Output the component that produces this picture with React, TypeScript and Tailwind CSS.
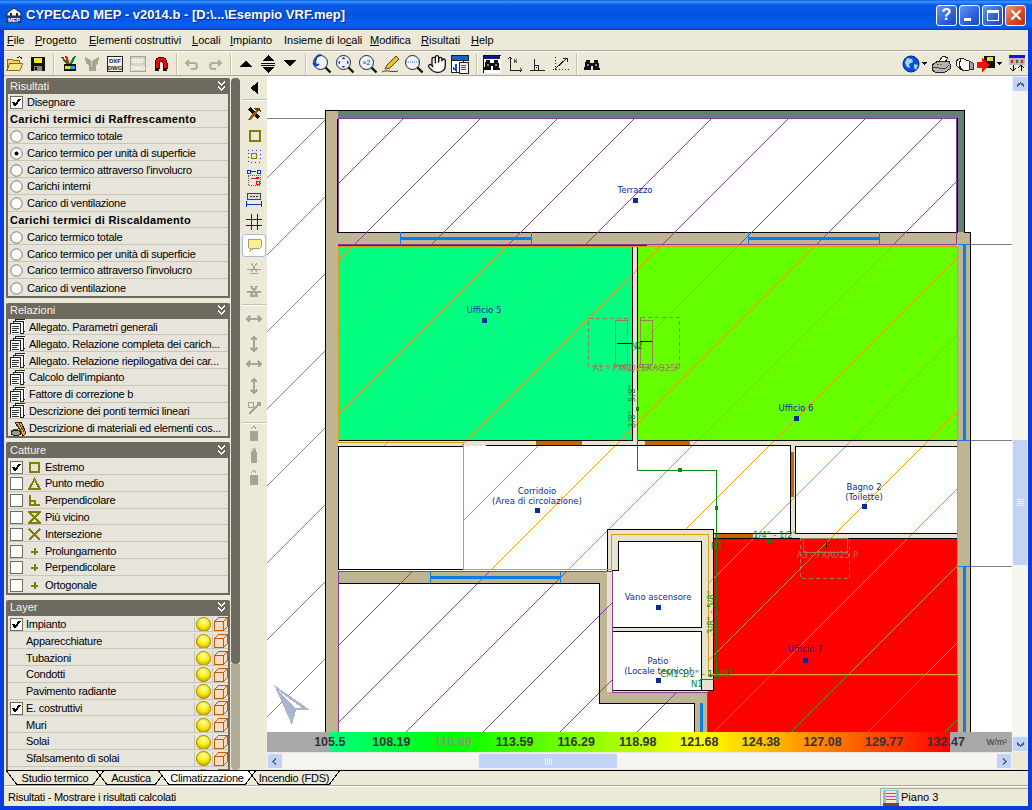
import type { ReactNode } from "react";
import { Hand } from "lucide-react";

const font = { fontFamily: '"Liberation Sans", Arial, sans-serif' };
const cad = "'DejaVu Sans', sans-serif";

// --- small pixel icons ---
const Ico = ({ w = 18, h = 18, vb, children }: { w?: number; h?: number; vb?: string; children: ReactNode }) => (
  <svg width={w} height={h} viewBox={vb ?? `0 0 ${w} ${h}`} shapeRendering="crispEdges" className="shrink-0">
    {children}
  </svg>
);

const Folder = () => (
  <Ico>
    <path d="M1 15V4h5l1 1h6v3" fill="#f5d36a" stroke="#8a6a10" />
    <path d="M1 15l3-7h13l-3 7z" fill="#fbe38a" stroke="#8a6a10" />
    <path d="M11 3c2-2 4-1 5 1" fill="none" stroke="#222" />
  </Ico>
);
const Floppy = () => (
  <Ico>
    <rect x="2" y="2" width="14" height="14" fill="#111" />
    <rect x="5" y="3" width="8" height="5" fill="#f0e040" />
    <rect x="5" y="11" width="8" height="5" fill="#888" />
    <rect x="6" y="12" width="2" height="3" fill="#111" />
  </Ico>
);
const Pencils = () => (
  <Ico>
    <path d="M2 2l6 8M15 1l-5 9" stroke="#1a7a1a" strokeWidth="2" />
    <path d="M6 1l3 9" stroke="#d02020" strokeWidth="2" />
    <rect x="4" y="9" width="12" height="7" fill="#111" />
    <rect x="5" y="11" width="5" height="3" fill="#f0e020" />
    <rect x="10" y="11" width="5" height="3" fill="#30a0e0" />
  </Ico>
);
const Shirt = () => (
  <Ico>
    <path d="M2 2l4 2 3 2 3-2 4-2-1 7-2 1v6H6v-6L3 9z" fill="#a8a494" />
    <path d="M8 5v7" stroke="#d8d4c4" />
  </Ico>
);
const Dxf = ({ off }: { off?: boolean }) => (
  <svg width="18" height="18" viewBox="0 0 18 18" className="shrink-0">
    <rect x="1.5" y="1.5" width="15" height="15" fill={off ? "#d8d4c4" : "#f4f4f4"} stroke={off ? "#a8a494" : "#222"} />
    <text x="9" y="8" fontSize="6" fontWeight="bold" textAnchor="middle" fill={off ? "#fff" : "#222"} fontFamily="Liberation Sans">DXF</text>
    <text x="9" y="14.5" fontSize="6" fontWeight="bold" textAnchor="middle" fill={off ? "#fff" : "#222"} fontFamily="Liberation Sans">DWG</text>
  </svg>
);
const Magnet = () => (
  <Ico>
    <path d="M3 13V8a6 6 0 0 1 12 0v5h-4V8a2 2 0 0 0-4 0v5z" fill="#e01010" stroke="#600" />
    <rect x="3" y="13" width="4" height="3" fill="#111" />
    <rect x="11" y="13" width="4" height="3" fill="#111" />
  </Ico>
);
const Turn = ({ flip }: { flip?: boolean }) => (
  <svg width="18" height="18" viewBox="0 0 18 18" className="shrink-0" style={flip ? { transform: "scaleX(-1)" } : undefined}>
    <path d="M6 5l-3 3 3 3M3 8h8a3 3 0 0 1 0 6H8" fill="none" stroke="#b0ac9c" strokeWidth="2" />
  </svg>
);
const TriUp = () => (
  <Ico w={12} h={8}>
    <path d="M6 0l6 7H0z" fill="#000" />
  </Ico>
);
const TriDown = () => (
  <Ico w={12} h={8}>
    <path d="M0 0h12L6 7z" fill="#000" />
  </Ico>
);
const UpDown = () => (
  <Ico w={14} h={18}>
    <path d="M7 0l6 6H1zM7 18l6-6H1z" fill="#000" />
    <path d="M0 8h14M0 10h14" stroke="#000" />
  </Ico>
);
const Lens = ({ children }: { children?: ReactNode }) => (
  <svg width="20" height="20" viewBox="0 0 20 20" className="shrink-0">
    <circle cx="8.5" cy="8.5" r="7" fill="#eef6fb" stroke="#222" />
    <path d="M13.5 13.5l5 5" stroke="#111" strokeWidth="2.4" />
    {children}
  </svg>
);
const Pencil = () => (
  <svg width="20" height="20" viewBox="0 0 20 20" className="shrink-0">
    <path d="M15 2l3 3-9 9-5 1 2-4z" fill="#f0c030" stroke="#604010" />
    <path d="M1 18c5-3 9 1 16-1" fill="none" stroke="#333" />
  </svg>
);
const Sheets = () => (
  <Ico w={20} h={20}>
    <rect x="1" y="1" width="17" height="5" fill="#2060c0" stroke="#123" />
    <rect x="1" y="6" width="12" height="12" fill="#fff" stroke="#123" />
    <rect x="9" y="8" width="9" height="11" fill="#eee" stroke="#222" />
    <path d="M11 11h5M11 13h5M11 15h5" stroke="#555" />
    <path d="M6 10v6l-3-2" fill="none" stroke="#1050d0" strokeWidth="2" />
  </Ico>
);
const Binoculars = ({ blue }: { blue?: boolean }) => (
  <Ico>
    {blue && <rect x="0" y="0" width="18" height="18" fill="#fff" stroke="#111" />}
    {blue && <rect x="1" y="1" width="16" height="3" fill="#101880" />}
    <path d="M3 5h4v3h4V5h4l2 10H10v-4H8v4H1z" fill="#111" />
    <rect x="4" y="9" width="2" height="2" fill="#888" />
    <rect x="12" y="9" width="2" height="2" fill="#888" />
  </Ico>
);
const AxisA = () => (
  <Ico>
    <path d="M4 2v13h12M2 4l2-2 2 2M14 13l2 2-2 2" fill="none" stroke="#222" />
    <path d="M8 4l3 4M11 4L8 8" stroke="#555" />
  </Ico>
);
const AngleA = () => (
  <Ico>
    <path d="M1 15h15M5 4v11" fill="none" stroke="#222" />
    <path d="M5 10h4v5" fill="none" stroke="#222" />
    <rect x="7" y="12" width="1" height="1" fill="#222" />
  </Ico>
);
const DotAxis = () => (
  <Ico>
    <path d="M3 2v14M1 14h16" fill="none" stroke="#222" strokeDasharray="1 2" />
    <path d="M3 14L15 3M11 3h4v4" fill="none" stroke="#222" />
  </Ico>
);
const Globe = () => (
  <svg width="18" height="18" viewBox="0 0 18 18" className="shrink-0">
    <circle cx="9" cy="9" r="8" fill="#0850d8" stroke="#052a80" />
    <path d="M5 3l5 1 1 3-4 2 1 4-3-1-2-4zM12 9l4 1-2 5-2-2z" fill="#a8d4f4" />
  </svg>
);
const Drop = () => (
  <Ico w={5} h={3}>
    <path d="M0 0h5L2.5 3z" fill="#000" />
  </Ico>
);
const Printer = () => (
  <Ico w={20} h={18}>
    <path d="M12 1l5 2-4 5-5-2z" fill="#fff" stroke="#222" />
    <path d="M1 10l6-4h11l1 3v5l-5 3H4l-3-2z" fill="#b4b4b4" stroke="#222" />
    <rect x="6" y="9" width="2" height="1" fill="#d02020" />
    <rect x="9" y="9" width="2" height="1" fill="#20a020" />
    <path d="M2 12l12 2 4-4" fill="none" stroke="#444" />
  </Ico>
);
const Camera = () => (
  <Ico w={20} h={18}>
    <path d="M2 6l5-3 8 3v9l-6 1-6-5z" fill="#fff" stroke="#222" />
    <path d="M15 6l4 2v6h-4z" fill="#a0a0a0" stroke="#333" />
    <path d="M7 3l-2 7 4 6" fill="none" stroke="#222" />
  </Ico>
);
const SaveRed = () => (
  <Ico>
    <rect x="7" y="1" width="11" height="12" fill="#111" />
    <rect x="10" y="2" width="6" height="4" fill="#e8e020" />
    <path d="M0 7h5V3l8 7-8 7v-4H0z" fill="#f01010" />
  </Ico>
);
const Panels = () => (
  <Ico w={16} h={17}>
    <rect x="0" y="0" width="16" height="3" fill="#1818d8" />
    <rect x="0" y="3" width="16" height="7" fill="#b8b8b8" />
    <rect x="2" y="5" width="2" height="3" fill="#d02020" />
    <rect x="7" y="5" width="2" height="3" fill="#208020" />
    <rect x="12" y="5" width="2" height="3" fill="#d02020" />
    <path d="M4 10v6M1 13l3 3 3-3M12 16v-6M9 13l3-3 3 3" fill="none" stroke="#000" />
  </Ico>
);

const Sep = () => <div className="ml-[6px] mr-[5px] h-[20px] w-[2px] shrink-0 border-l border-r border-l-[#c4c0ac] border-r-white" />;

const TopToolbar = () => (
  <div className="flex h-[23px] shrink-0 items-center bg-[#ece9d8] pl-[2px]">
    <div className="flex items-center gap-[5px]">
      <Folder />
      <Floppy />
    </div>
    <Sep />
    <div className="flex items-center gap-[5px]">
      <Pencils />
      <Shirt />
      <Dxf />
      <Dxf off />
      <Magnet />
    </div>
    <Sep />
    <div className="flex items-center gap-[5px]">
      <Turn />
      <Turn flip />
    </div>
    <Sep />
    <div className="flex w-[62px] items-center justify-between px-[3px]">
      <TriUp />
      <UpDown />
      <TriDown />
    </div>
    <Sep />
    <div className="flex items-center gap-[3px]">
      <Lens>
        <path d="M9 1c-5 0-7 5-5 11M4 12l-3-3M4 12l3-2" fill="none" stroke="#1040c0" strokeWidth="2" />
      </Lens>
      <Lens>
        <path d="M8.5 3l2 2h-4zM8.5 14l2-2h-4zM3 8.5l2 2v-4zM14 8.5l-2 2v-4z" fill="#1040d0" />
      </Lens>
      <Lens>
        <text x="8.5" y="11" fontSize="7" textAnchor="middle" fill="#1040a0" fontFamily="Liberation Sans">×2</text>
      </Lens>
      <Pencil />
      <Lens>
        <path d="M2 8h13" stroke="#3070d0" strokeDasharray="1 1" />
      </Lens>
      <Hand size={20} strokeWidth={1.6} color="#111" fill="#fff" />
      <Sheets />
    </div>
    <Sep />
    <div className="flex items-center gap-[5px]">
      <Binoculars blue />
      <AxisA />
      <AngleA />
      <DotAxis />
    </div>
    <Sep />
    <Binoculars />
    <div className="ml-auto flex items-center pr-[3px]">
      <Globe />
      <span className="ml-[2px] mr-[4px]">
        <Drop />
      </span>
      <Printer />
      <span className="w-[3px]" />
      <Camera />
      <span className="w-[3px]" />
      <SaveRed />
      <span className="ml-[2px] mr-[7px]">
        <Drop />
      </span>
      <Panels />
    </div>
  </div>
);

// --- left side panels ---
const Chevrons = () => (
  <svg width="9" height="11" viewBox="0 0 9 11" shapeRendering="crispEdges" className="shrink-0">
    <path d="M1 1l3.5 3L8 1M1 6l3.5 3L8 6" fill="none" stroke="#fff" strokeWidth="1.5" />
  </svg>
);

const PanelBox = ({ title, children, wide }: { title: string; children: ReactNode; wide?: boolean }) => (
  <div className={`shrink-0 ${wide ? "mt-[1px]" : ""}`}>
    <div className="flex h-[16px] items-center justify-between rounded-t-[2px] bg-[#6e6a60] pl-[4px] pr-[4px] text-[11px] text-[#f4f2ea]">
      <span>{title}</span>
      <Chevrons />
    </div>
    <div className="border-x-2 border-b-2 border-[#6e6a60] bg-[#e7e4dc]">{children}</div>
  </div>
);

const Row = ({ children }: { children: ReactNode }) => (
  <div className="flex h-[16.8px] items-center overflow-hidden whitespace-nowrap border-b border-[#c9c6b2] pl-[2px] pt-[2px] text-[11px] leading-none tracking-[-0.26px] text-black last:border-b-0">
    {children}
  </div>
);

const Check = ({ on }: { on?: boolean }) => (
  <svg width="13" height="13" viewBox="0 0 13 13" shapeRendering="crispEdges" className="shrink-0">
    <rect x="0.5" y="0.5" width="12" height="12" fill="#fff" stroke="#6f6c60" />
    {on && <path d="M3 6l2 3 5-6" fill="none" stroke="#000" strokeWidth="2" />}
  </svg>
);

const Radio = ({ on }: { on?: boolean }) => (
  <svg width="13" height="13" viewBox="0 0 13 13" className="shrink-0">
    <circle cx="6.5" cy="6.5" r="5.7" fill="#fff" stroke="#77746a" />
    {on && <circle cx="6.5" cy="6.5" r="2" fill="#000" />}
  </svg>
);

const RadioRow = ({ label, on }: { label: string; on?: boolean }) => (
  <Row>
    <span className="mr-[4px] flex">
      <Radio on={on} />
    </span>
    {label}
  </Row>
);

const Heading = ({ label }: { label: string }) => (
  <Row>
    <span className="font-bold tracking-[0.33px]">{label}</span>
  </Row>
);

const DocIcon = () => (
  <Ico w={15} h={16}>
    <rect x="5" y="0" width="10" height="12" fill="#fff" stroke="#222" />
    <rect x="3" y="2" width="10" height="12" fill="#fff" stroke="#222" />
    <rect x="0.5" y="4.5" width="10" height="11" fill="#fff" stroke="#222" />
    <path d="M2 7h7M2 9h7M2 11h5M2 13h7" stroke="#333" />
  </Ico>
);

const MatIcon = () => (
  <Ico w={16} h={16}>
    <path d="M5 1l6 0 5 11-3 3z" fill="#e8b020" stroke="#222" />
    <path d="M7 3l5 9M9 2l5 9" stroke="#604000" />
    <ellipse cx="6" cy="12" rx="5" ry="2.5" fill="#999" stroke="#222" />
    <path d="M1 10c2-2 7-2 9 0" fill="none" stroke="#444" />
  </Ico>
);

const DocRow = ({ label, mat }: { label: string; mat?: boolean }) => (
  <Row>
    {mat ? <MatIcon /> : <DocIcon />}
    <span className={mat ? "ml-[3px]" : "ml-[4px]"}>{label}</span>
  </Row>
);

const olive = "#808000";
const SnapIcon = ({ d }: { d: string }) => (
  <Ico w={13} h={13}>
    <path d={d} fill="none" stroke={olive} strokeWidth="2" />
  </Ico>
);

const SnapRow = ({ label, d, on }: { label: string; d: string; on?: boolean }) => (
  <Row>
    <span className="flex w-[18px]">
      <Check on={on} />
    </span>
    <SnapIcon d={d} />
    <span className="ml-[4px]">{label}</span>
  </Row>
);

const Bulb = () => (
  <svg width="15" height="15" viewBox="0 0 15 15" className="shrink-0">
    <defs>
      <radialGradient id="bulb" cx="0.5" cy="0.3" r="0.7">
        <stop offset="0" stopColor="#ffffb0" />
        <stop offset="0.6" stopColor="#f8e800" />
        <stop offset="1" stopColor="#c0a000" />
      </radialGradient>
    </defs>
    <circle cx="7.5" cy="7.5" r="7" fill="url(#bulb)" stroke="#9a8a10" />
  </svg>
);

const Cube = () => (
  <Ico w={14} h={14}>
    <path d="M0.5 4.5h9v9h-9z" fill="#fbdcc0" stroke="#b85a10" />
    <path d="M0.5 4.5l4-4h9l-4 4z" fill="#fbdcc0" stroke="#b85a10" />
    <path d="M9.5 4.5l4-4v9l-4 4z" fill="#fbdcc0" stroke="#b85a10" />
  </Ico>
);

const LayerRow = ({ label, on }: { label: string; on?: boolean }) => (
  <Row>
    <span className="flex w-[16px]">{on && <Check on />}</span>
    <span className="flex-1">{label}</span>
    <span className="flex h-full items-center gap-[1px] border-l border-[#c9c6b2] pl-[1px]">
      <Bulb />
      <span className="flex h-full items-center border-l border-[#c9c6b2] pl-[1px]">
        <Cube />
      </span>
    </span>
  </Row>
);

const Panels2 = () => (
  <div className="flex h-full w-[224px] shrink-0 flex-col gap-[4px] overflow-hidden pt-[2px]">
    <PanelBox title="Risultati">
      <Row>
        <span className="mr-[4px] flex">
          <Check on />
        </span>
        Disegnare
      </Row>
      <Heading label="Carichi termici di Raffrescamento" />
      <RadioRow label="Carico termico totale" />
      <RadioRow label="Carico termico per unità di superficie" on />
      <RadioRow label="Carico termico attraverso l'involucro" />
      <RadioRow label="Carichi interni" />
      <RadioRow label="Carico di ventilazione" />
      <Heading label="Carichi termici di Riscaldamento" />
      <RadioRow label="Carico termico totale" />
      <RadioRow label="Carico termico per unità di superficie" />
      <RadioRow label="Carico termico attraverso l'involucro" />
      <RadioRow label="Carico di ventilazione" />
    </PanelBox>
    <PanelBox title="Relazioni" wide>
      <DocRow label="Allegato. Parametri generali" />
      <DocRow label="Allegato. Relazione completa dei carich..." />
      <DocRow label="Allegato. Relazione riepilogativa dei car..." />
      <DocRow label="Calcolo dell'impianto" />
      <DocRow label="Fattore di correzione b" />
      <DocRow label="Descrizione dei ponti termici lineari" />
      <DocRow label="Descrizione di materiali ed elementi cos..." mat />
    </PanelBox>
    <PanelBox title="Catture">
      <SnapRow label="Estremo" d="M2 2h9v9H2z" on />
      <SnapRow label="Punto medio" d="M6.5 2L11.5 11.5H1.5z" />
      <SnapRow label="Perpendicolare" d="M2 1v10h10M2 7h5v4" />
      <SnapRow label="Più vicino" d="M1 1h11L1 12h11z" />
      <SnapRow label="Intersezione" d="M1 1l11 11M12 1L1 12" />
      <SnapRow label="Prolungamento" d="M6.5 3v7M3 6.5h7" />
      <SnapRow label="Perpendicolare" d="M6.5 3v7M3 6.5h7" />
      <SnapRow label="Ortogonale" d="M6.5 3v7M3 6.5h7" />
    </PanelBox>
    <PanelBox title="Layer" wide>
      <LayerRow label="Impianto" on />
      <LayerRow label="Apparecchiature" />
      <LayerRow label="Tubazioni" />
      <LayerRow label="Condotti" />
      <LayerRow label="Pavimento radiante" />
      <LayerRow label="E. costruttivi" on />
      <LayerRow label="Muri" />
      <LayerRow label="Solai" />
      <LayerRow label="Sfalsamento di solai" />
      <LayerRow label="" />
    </PanelBox>
  </div>
);

const PanelScroll = () => (
  <div className="ml-[1px] flex h-full w-[9px] shrink-0 flex-col pt-[2px]">
    <div className="h-[586px] rounded-[4px] bg-[#6e6a60]" />
    <div className="flex-1 rounded-b-[4px] bg-[#b0ac98]" />
  </div>
);

// --- vertical toolbar ---
const F = "#a8a494";
const VBtn = ({ y, children, hot }: { y: number; children: ReactNode; hot?: boolean }) => (
  <div
    style={{ height: y }}
    className={`flex shrink-0 items-center justify-center ${hot ? "mx-[1px] rounded-[3px] border border-[#a8bcd8] bg-white" : ""}`}
  >
    {children}
  </div>
);

const VSep = () => <div className="mx-[1px] my-[1px] h-[2px] shrink-0 border-t border-b border-t-[#c4c0ac] border-b-white" />;

const VToolbar = () => (
  <div className="ml-[1px] flex h-full w-[26px] shrink-0 flex-col bg-[#ece9d8] pt-[2px]">
    <VBtn y={20}>
      <Ico w={8} h={12}>
        <path d="M8 0v12L0 6z" fill="#000" />
      </Ico>
    </VBtn>
    <VSep />
    <VBtn y={23}>
      <Ico w={16} h={16}>
        <path d="M2 3l9 10 3-2L5 1z" fill="#111" />
        <path d="M3 14L12 4" stroke="#a05a10" strokeWidth="2.5" />
        <path d="M7 2h7l1 4-5-2z" fill="#604010" />
      </Ico>
    </VBtn>
    <VBtn y={20}>
      <Ico w={13} h={13}>
        <path d="M1.5 1.5h10v10h-10z" fill="none" stroke={olive} strokeWidth="2" />
      </Ico>
    </VBtn>
    <VBtn y={22}>
      <Ico w={14} h={14}>
        <path d="M1 1h12v12H1z" fill="none" stroke="#1030e0" strokeDasharray="1 3" />
        <path d="M4.5 4.5h5v5h-5z" fill="none" stroke={olive} />
      </Ico>
    </VBtn>
    <VBtn y={22}>
      <Ico w={16} h={16}>
        <rect x="1" y="0" width="3" height="3" fill="none" stroke="#1030e0" />
        <path d="M5 1h5" stroke="#1030e0" />
        <rect x="11" y="0" width="3" height="3" fill="none" stroke="#1030e0" />
        <rect x="2" y="5" width="12" height="10" fill="none" stroke="#555" strokeDasharray="1 1" />
        <rect x="10" y="7" width="3" height="2" fill="#e01010" />
        <rect x="10" y="11" width="3" height="3" fill="none" stroke="#e01010" />
        <path d="M5 8h5" stroke="#e01010" />
      </Ico>
    </VBtn>
    <VBtn y={21}>
      <Ico w={16} h={14}>
        <rect x="1.5" y="0.5" width="13" height="6" fill="#ddd" stroke="#444" />
        <path d="M4 3h8" stroke="#333" strokeDasharray="2 1" />
        <path d="M0 11h16M0.5 8v6M15.5 8v6" stroke="#1030d0" />
      </Ico>
    </VBtn>
    <VBtn y={24}>
      <Ico w={16} h={16}>
        <path d="M5 0v16M11 0v16M0 5h16M0 11h16" stroke="#222" />
      </Ico>
    </VBtn>
    <VBtn y={23} hot>
      <Ico w={15} h={15}>
        <path d="M2 1h11l1 1v7l-1 1H7l-4 3 1-3H2L1 9V2z" fill="#fdf090" stroke="#a8a070" />
      </Ico>
    </VBtn>
    {[22, 24].map((h, i) => (
      <VBtn key={i} y={h}>
        <Ico w={16} h={14}>
          <path d="M1 8h14M4 12h8M5 2l6 9M11 2L5 11" stroke={F} strokeWidth={i ? 2 : 1} />
        </Ico>
      </VBtn>
    ))}
    <VSep />
    {[
      { h: 26, d: "M1 7h14M4 4L1 7l3 3M12 4l3 3-3 3" },
      { h: 21, d: "M8 1v14M5 4l3-3 3 3M5 12l3 3 3-3" },
      { h: 22, d: "M1 7h14M4 4L1 7l3 3M12 4l3 3-3 3" },
      { h: 19, d: "M8 1v14M5 4l3-3 3 3M5 12l3 3 3-3" },
    ].map((b, i) => (
      <VBtn key={i} y={b.h}>
        <Ico w={16} h={16}>
          <path d={b.d} fill="none" stroke={F} strokeWidth="2.4" />
        </Ico>
      </VBtn>
    ))}
    <VBtn y={26}>
      <Ico w={16} h={16}>
        <path d="M3 14l9-9" stroke={F} strokeWidth="2" />
        <rect x="2" y="2" width="5" height="5" fill="none" stroke={F} />
        <rect x="11" y="2" width="4" height="4" fill={F} />
      </Ico>
    </VBtn>
    <VSep />
    {[18, 26, 18].map((h, i) => (
      <VBtn key={i} y={h}>
        <Ico w={14} h={18}>
          <path d={i === 1 ? "M4 5l3-2 3 2v11H4z" : "M3 6h8v10H3z"} fill={F} />
          <path d="M4 4l3-3 2 3" fill="none" stroke={F} />
        </Ico>
      </VBtn>
    ))}
  </div>
);

// --- plan drawing ---
const tan = "#bfb592";
const light = "#e6e2d0";
const purple = "#8a3d9a";
const hatchOrange = "#df9a12";
const pipe = "#0a8a10";
const navy = "#0a2a9a";
const unit = "#9a7d5a";

const hatch = Array.from({ length: 22 }, (_, k) => 522 + 77 * (k - 5));

const Hatch = ({ clip, color }: { clip: string; color: string }) => (
  <g clipPath={`url(#${clip})`}>
    {hatch.map((c) => (
      <line key={c} x1={c - 60} y1={60} x2={c - 800} y2={800} stroke={color} />
    ))}
  </g>
);

const RoomLabel = ({ x, y, lines, my }: { x: number; y: number; lines: string[]; my: number }) => (
  <g fill={navy} fontFamily={cad} fontSize="8.5" textAnchor="middle">
    {lines.map((l, i) => (
      <text key={l} x={x} y={y + i * 9.5}>
        {l}
      </text>
    ))}
    <rect x={x - 2.5} y={my - 2.5} width="5" height="5" />
  </g>
);

const Plan = () => (
  <svg width="745" height="656" viewBox="267 76 745 656" shapeRendering="crispEdges" className="block shrink-0 bg-white">
    <defs>
      <clipPath id="cGrey">
        <rect x="267" y="118" width="58" height="614" />
      </clipPath>
      <clipPath id="cPurple">
        <path d="M338 118h619v126H338zM338 571h274v121h95v40H338z" />
      </clipPath>
      <clipPath id="cOrange">
        <path d="M338 245h619v201H338zM463 446h494v92H713v-9H607v41H463zM708 538h249v136H708z" />
      </clipPath>
      <clipPath id="cOlive">
        <path d="M708 675h249v57H708z" />
      </clipPath>
    </defs>

    <Hatch clip="cGrey" color="#808080" />
    <g fill="#808080">
      <rect x="267" y="118" width="70" height="1" />
      <rect x="970" y="244" width="42" height="1" />
      <rect x="970" y="440" width="42" height="1" />
      <rect x="970" y="566" width="42" height="1" />
    </g>

    {/* walls */}
    <rect x="325" y="110" width="13" height="622" fill={tan} />
    <rect x="338" y="110" width="626" height="8" fill="#5f8272" />
    <rect x="957" y="118" width="7" height="114" fill="#5f8272" />
    <rect x="338" y="232" width="632" height="14" fill={tan} />
    <rect x="957" y="232" width="13" height="500" fill={tan} />
    <rect x="338" y="572" width="274" height="11" fill={tan} />
    <rect x="599" y="583" width="13" height="120" fill={tan} />
    <rect x="599" y="692" width="108" height="11" fill={tan} />
    <rect x="694" y="703" width="13" height="29" fill={tan} />
    <path d="M325.5 732V110.5H964.5V232.5H970.5V732" fill="none" stroke="#000" />
    <path d="M337.5 118.5V232.5H957.5V118.5H337.5" fill="none" stroke="#000" />

    {/* rooms with a thermal colour */}
    <rect x="338" y="246" width="294" height="194" fill="#00ff80" />
    <rect x="638" y="246" width="319" height="194" fill="#66ff00" />
    <rect x="632" y="246" width="6" height="194" fill={light} />
    <rect x="338" y="440" width="619" height="6" fill={light} />
    <rect x="790" y="446" width="5" height="92" fill={light} />
    <rect x="713" y="533" width="244" height="5" fill={light} />
    <rect x="607" y="529" width="106" height="163" fill={light} />
    <rect x="714" y="538" width="243" height="194" fill="#ff0000" />
    <rect x="708" y="691" width="6" height="41" fill="#ff0000" />

    <Hatch clip="cOrange" color={hatchOrange} />
    <Hatch clip="cOlive" color="#7d8a2a" />
    <Hatch clip="cPurple" color={purple} />

    {/* rooms above the hatch */}
    <path d="M618.5 541.5H701.5V627.5H612.5V570.5H618.5z" fill="#fff" stroke="#000" />
    <rect x="612.5" y="631.5" width="89" height="59" fill="#fff" stroke="#000" />
    <path d="M463 446.5H338.5V569.5H463z" fill="#fff" />
    <path d="M463 446.5H338.5V569.5H463" fill="none" stroke="#000" />
    <path d="M632.5 246V440.5H338M637.5 246V440.5H957M486 445.5H790.5V533.5H713M795.5 446V533.5H957M795.5 446H957M713 538.5H957" fill="none" stroke="#000" />
    <path d="M599.5 583.5H338M599.5 583V703.5H694.5V732M707.5 703V732M607.5 572V529.5H713.5V690.5H702" fill="none" stroke="#000" />

    {/* windows */}
    <g stroke="#0a7fe8" fill="none">
      <path d="M400.5 232v12M531.5 232v12M748.5 232v12M879.5 232v12M430.5 572v11M560.5 572v11" />
      <path d="M400 238.5h132M748 238.5h132M430 577.5h131" strokeWidth="3" />
      <path d="M964.5 244v196M964.5 566v166M701.5 703v29" strokeWidth="3" />
      <path d="M958 244.5h12M958 440.5h12M958 566.5h12" />
    </g>
    <g fill="#c86400">
      <rect x="536" y="441" width="46" height="4" />
      <rect x="645" y="441" width="45" height="4" />
      <rect x="791" y="452" width="3" height="45" />
      <rect x="715" y="534" width="38" height="4" />
    </g>

    {/* zone outlines */}
    <path d="M338.5 232V118.5H956.5V244.5H647M338 244.5H647M338.5 571.5H612.5V692.5H707.5V732M338.5 571V732" fill="none" stroke={purple} />
    <path d="M338 245.5H647" stroke="#7a1010" />
    <path d="M338.5 246V442.5H463.5V569.5H611.5V534.5H708.5V674H957.5V246M338 246.5H957" fill="none" stroke="#d6a010" />
    <path d="M708 675.5H957.5V732" fill="none" stroke="#3a8a20" />

    {/* room labels */}
    <RoomLabel x={635} y={193} lines={["Terrazzo"]} my={200} />
    <RoomLabel x={484} y={313} lines={["Ufficio 5"]} my={320} />
    <RoomLabel x={796} y={411} lines={["Ufficio 6"]} my={418} />
    <RoomLabel x={537} y={494} lines={["Corridoio", "(Area di circolazione)"]} my={510} />
    <RoomLabel x={864} y={490} lines={["Bagno 2", "(Toilette)"]} my={506} />
    <RoomLabel x={805} y={652} lines={["Ufficio 7"]} my={660} />
    <RoomLabel x={658} y={600} lines={["Vano ascensore"]} my={607} />
    <RoomLabel x={658} y={664} lines={["Patio", "(Locale tecnico)"]} my={680} />

    {/* indoor units */}
    <g fill="none" stroke={unit}>
      <rect x="588.5" y="318.5" width="39" height="48" strokeDasharray="4 3" />
      <rect x="615.5" y="320.5" width="12" height="45" />
      <rect x="640.5" y="317.5" width="39" height="50" strokeDasharray="4 3" />
      <rect x="640.5" y="320.5" width="12" height="44" />
      <rect x="800.5" y="538.5" width="49" height="40" strokeDasharray="4 3" />
      <rect x="803.5" y="538.5" width="44" height="14" />
    </g>
    <g fill={unit} fontFamily={cad} fontSize="8.5">
      <text x="593" y="371">A1 - FXAQ25P</text>
      <text x="622" y="371">A1 - FXAQ25P</text>
      <text x="797" y="558">A3 - FXAU25 P</text>
    </g>

    {/* piping */}
    <path d="M637.5 390V470.5H716.5V679.5H700M716.5 541.5H826" fill="none" stroke={pipe} />
    <path d="M617 343.5H632M640 341.5H652M826.5 542V548" stroke="#000" />
    <g fill={pipe}>
      <rect x="636" y="407" width="3" height="4" />
      <rect x="678" y="468" width="4" height="4" />
      <rect x="715" y="506" width="3" height="4" />
      <rect x="715" y="612" width="3" height="4" />
      <rect x="767" y="540" width="4" height="3" />
    </g>
    <g fill={pipe} fontFamily={cad} fontSize="8.5">
      <text x="631" y="349">N2</text>
      <text x="711" y="549">N3</text>
      <text x="691" y="687">N1</text>
      <text x="753" y="538">1/4" - 1/2"</text>
      <text x="660" y="677">CM1 1/2" - 1 1/8"</text>
      <text transform="translate(635 428) rotate(-90)">3/8" - 5/8"</text>
      <text transform="translate(714 634) rotate(-90)">3/8" - 5/8"</text>
    </g>

    {/* north arrow */}
    <path d="M274 685L310 710L296 710L292 725z" fill="#a8b4d0" />
    <path d="M279 691L302 708L295 708z" fill="#fff" />
  </svg>
);

const labels = ["105.5", "108.19", "110.89", "113.59", "116.29", "118.98", "121.68", "124.38", "127.08", "129.77", "132.47"];

const Legend = () => (
  <div className="flex h-[20px] w-[745px] shrink-0 items-center bg-[#a9a9a9] bg-[linear-gradient(90deg,#00ff80_0%,#00ff00_20%,#80ff00_40%,#ffff00_60%,#ff8000_80%,#ff0000_100%)] bg-[length:621px_100%] bg-[position:62px_0] bg-no-repeat pl-[32px]">
    {labels.map((l, i) => (
      <span key={l} className={`w-[61.6px] shrink-0 text-center text-[12.5px] font-bold leading-none ${i === 2 ? "text-[#7f9f70]" : "text-[#333]"}`}>
        {l}
      </span>
    ))}
    <span className="ml-[10px] text-[8.5px] text-[#333]">W/m²</span>
  </div>
);

const ScrollBtn = ({ d }: { d: string }) => (
  <div className="flex h-[16px] w-[16px] shrink-0 items-center justify-center rounded-[2px] border border-[#eef2fc] bg-[#c3d3f7]">
    <svg width="9" height="7" viewBox="0 0 9 7" shapeRendering="crispEdges">
      <path d={d} fill="none" stroke="#4d6185" strokeWidth="2" />
    </svg>
  </div>
);

const Thumb = ({ horizontal }: { horizontal?: boolean }) => (
  <div className={`flex items-center justify-center rounded-[2px] border border-[#eef2fc] ${horizontal ? "ml-[195px] h-[16px] w-[140px] bg-[#c3d3f7]" : "mt-[347px] h-[127px] w-[16px] bg-[#c3d3f7]"}`}>
    <div className={`flex gap-[1px] ${horizontal ? "" : "flex-col"}`}>
      {[0, 1, 2, 3].map((i) => (
        <div key={i} className={horizontal ? "h-[7px] w-px bg-[#eef2fc]" : "h-px w-[7px] bg-[#eef2fc]"} />
      ))}
    </div>
  </div>
);

const Canvas = () => (
  <div className="flex h-full flex-1 flex-col">
    <div className="flex">
      <div className="flex w-[745px] flex-col">
        <Plan />
        <Legend />
      </div>
      <div className="flex h-[676px] w-[16px] flex-col bg-[#f6f5ef]">
        <ScrollBtn d="M1 5l3.5-3L8 5" />
        <div className="flex-1">
          <Thumb />
        </div>
        <ScrollBtn d="M1 2l3.5 3L8 2" />
      </div>
    </div>
    <div className="mt-[1px] flex h-[16px] w-[745px] bg-[#f6f5ef]">
      <ScrollBtn d="M5 0.5L2 3.5l3 3" />
      <div className="flex-1">
        <Thumb horizontal />
      </div>
      <ScrollBtn d="M3 0.5l3 3-3 3" />
    </div>
  </div>
);

// --- bottom tabs ---
const Tab = ({ label, w, active }: { label: string; w: number; active?: boolean }) => (
  <div className="relative -mr-[8px] flex h-[14px] shrink-0 items-center justify-center" style={{ width: w }}>
    <svg className="absolute inset-0" width={w} height="14" viewBox={`0 0 ${w} 14`} shapeRendering="crispEdges">
      <path d={`M0.5 0L10.5 13H${w - 10.5}L${w - 0.5} 0`} fill={active ? "#fff" : "none"} stroke="#000" />
    </svg>
    <span className="relative text-[11px] leading-none tracking-[-0.25px] text-black">{label}</span>
  </div>
);

const TitleButton = ({ children, close }: { children: ReactNode; close?: boolean }) => (
  <div className={`flex h-[21px] w-[21px] items-center justify-center rounded-[3px] border border-white ${close ? "bg-[linear-gradient(135deg,#e89a7a,#d6461e_60%,#c03010)]" : "bg-[linear-gradient(135deg,#6a94ee,#2d5fd8_60%,#1d47c0)]"}`}>
    {children}
  </div>
);

const MenuItem = ({ pre, u, post, w }: { pre?: string; u: string; post: string; w: number }) => (
  <span style={{ width: w }} className="block shrink-0">
    {pre}
    <span className="underline">{u}</span>
    {post}
  </span>
);

export default function App() {
  return (
    <div style={font} className="flex h-[810px] w-[1032px] flex-col overflow-hidden bg-[#0a3ce0]">
      <div className="flex h-[30px] shrink-0 items-center bg-[linear-gradient(180deg,#0a60e8_0%,#3a93ff_6%,#0a5ae6_16%,#0054e3_50%,#0660f0_80%,#0a57e0_92%,#0040c8_100%)] pl-[6px] pr-[6px]">
        <svg width="16" height="16" viewBox="0 0 16 16" className="shrink-0">
          <rect x="0" y="9" width="16" height="7" fill="#2a3a80" />
          <path d="M1 6l7-5 7 5v3H1z" fill="#fff" stroke="#223" />
          <rect x="4" y="6" width="2" height="3" fill="#223" />
          <rect x="10" y="6" width="2" height="3" fill="#223" />
          <text x="8" y="15" fontSize="5.5" fontWeight="bold" textAnchor="middle" fill="#fff" fontFamily="Liberation Sans">MEP</text>
        </svg>
        <span className="ml-[4px] whitespace-nowrap text-[13px] font-bold text-white [text-shadow:1px_1px_0_#0f1f88]">CYPECAD MEP - v2014.b - [D:\...\Esempio VRF.mep]</span>
        <div className="ml-auto flex gap-[2px]">
          <TitleButton>
            <span className="text-[16px] font-bold leading-none text-white">?</span>
          </TitleButton>
          <TitleButton>
            <div className="mt-[9px] mr-[5px] h-[3px] w-[7px] bg-white" />
          </TitleButton>
          <TitleButton>
            <div className="h-[11px] w-[12px] border border-t-[3px] border-white" />
          </TitleButton>
          <TitleButton close>
            <svg width="12" height="12" viewBox="0 0 12 12">
              <path d="M1.5 1.5l9 9M10.5 1.5l-9 9" stroke="#fff" strokeWidth="2.2" />
            </svg>
          </TitleButton>
        </div>
      </div>

      <div className="mx-[4px] mb-[4px] flex min-h-0 flex-1 flex-col bg-[#ece9d8]">
        <div className="flex h-[20px] shrink-0 items-center pl-[3px] text-[11px] text-black">
          <MenuItem u="F" post="ile" w={28} />
          <MenuItem u="P" post="rogetto" w={54} />
          <MenuItem u="E" post="lementi costruttivi" w={103} />
          <MenuItem u="L" post="ocali" w={38} />
          <MenuItem u="I" post="mpianto" w={54} />
          <MenuItem pre="Insieme di lo" u="c" post="ali" w={86} />
          <MenuItem u="M" post="odifica" w={51} />
          <MenuItem u="R" post="isultati" w={50} />
          <MenuItem u="H" post="elp" w={30} />
        </div>
        <div className="h-[2px] shrink-0 border-t border-b border-t-[#aca899] border-b-white" />
        <TopToolbar />
        <div className="h-[1px] shrink-0 bg-[#aca899]" />

        <div className="flex min-h-0 flex-1 pl-[2px]">
          <Panels2 />
          <PanelScroll />
          <VToolbar />
          <Canvas />
        </div>

        <div className="ml-[2px] h-[1px] shrink-0 bg-black" />
        <div className="flex h-[14px] shrink-0 pl-[2px]">
          <Tab label="Studio termico" w={98} />
          <Tab label="Acustica" w={70} />
          <Tab label="Climatizzazione" w={98} active />
          <Tab label="Incendio (FDS)" w={92} />
        </div>
        <div className="h-[2px] shrink-0 border-t border-b border-t-[#aca899] border-b-white" />
        <div className="flex h-[19px] shrink-0 items-center justify-between pl-[4px] pt-[1px] text-[11px] text-black">
          <span className="tracking-[-0.25px]">Risultati - Mostrare i risultati calcolati</span>
          <div className="flex h-full w-[148px] items-center border-l border-t border-[#aca899] pl-[2px]">
            <Ico w={16} h={16}>
              <rect x="0" y="0" width="16" height="16" fill="#88c4d8" />
              <rect x="3" y="1" width="10" height="12" fill="#f6e8c8" />
              <path d="M3 3.5h10M3 6.5h10M3 9.5h10" stroke="#e030c0" />
              <rect x="0" y="13" width="16" height="3" fill="#7a4a20" />
            </Ico>
            <span className="ml-[2px]">Piano 3</span>
          </div>
        </div>
      </div>
    </div>
  );
}
